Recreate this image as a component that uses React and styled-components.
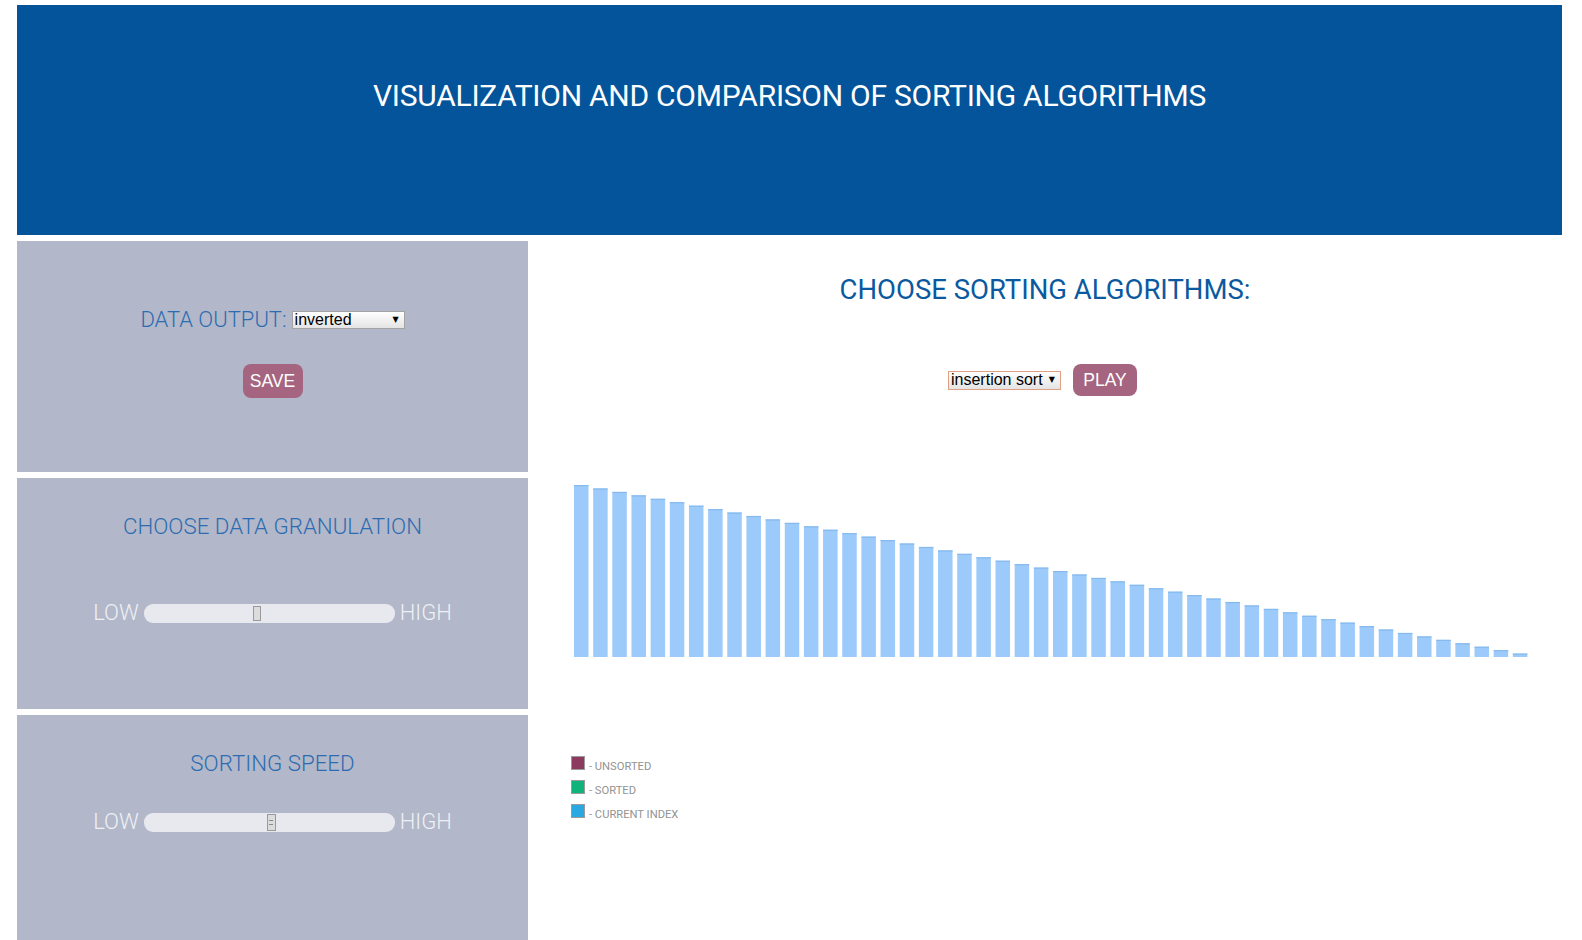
import React from "react";
import styled, { createGlobalStyle } from "styled-components";

const GlobalStyle = createGlobalStyle`
  html, body { margin: 0; padding: 0; background: #ffffff; }
  body { font-family: Roboto, "Liberation Sans", sans-serif; overflow: hidden; }
`;

const Page = styled.div`
  display: flex;
  flex-direction: column;
  gap: 6px;
  padding: 5px 20px 0 17px;
`;

const Header = styled.header`
  height: 230px;
  background: #03549a;
  color: #ffffff;
  text-align: center;
  padding-top: 73px;
  box-sizing: border-box;
`;

const Title = styled.h1`
  margin: 0;
  font-size: 30px;
  line-height: 36px;
  font-weight: 400;
  letter-spacing: -0.25px;
`;

const Main = styled.main`
  display: grid;
  grid-template-columns: 511px 1fr;
`;

const Sidebar = styled.aside`
  display: flex;
  flex-direction: column;
  gap: 6px;
`;

const Panel = styled.section`
  height: 231px;
  background: #b2b8c9;
  display: flex;
  flex-direction: column;
  align-items: center;
  padding-top: ${(p) => p.$top}px;
  box-sizing: border-box;
`;

const Row = styled.div`
  display: flex;
  align-items: center;
  gap: ${(p) => p.$gap || 5}px;
  margin-top: ${(p) => p.$mt || 0}px;
  margin-left: ${(p) => p.$ml || 0}px;
`;

const PanelLabel = styled.span`
  font-size: 22px;
  line-height: 26px;
  font-weight: 300;
  color: #2d6cb1;
`;

const PanelTitle = styled.h3`
  margin: 0;
  font-size: 22.3px;
  line-height: 26px;
  font-weight: 300;
  color: #2d6cb1;
`;

const SelectWrap = styled.span`
  position: relative;
  display: inline-block;
`;

const Select = styled.select`
  appearance: none;
  -webkit-appearance: none;
  width: ${(p) => p.$w}px;
  height: ${(p) => p.$h}px;
  margin: 0;
  padding: 0 14px 0 2px;
  font-family: "Liberation Sans", Arial, sans-serif;
  font-size: 16px;
  line-height: 16px;
  color: #000;
  border: 1px solid ${(p) => p.$border};
  border-radius: 0;
  background: linear-gradient(#ffffff, #e4e4e4);
  box-sizing: border-box;
  outline: none;
  display: block;
`;

const Arrow = styled.span`
  position: absolute;
  right: 6px;
  top: 50%;
  transform: translateY(-55%);
  font-size: 8px;
  color: #000;
  pointer-events: none;
  font-family: "DejaVu Sans", sans-serif;
`;

const Button = styled.button`
  background: #a5647f;
  color: #ffffff;
  border: none;
  border-radius: 8px;
  font-family: "Liberation Sans", Arial, sans-serif;
  font-size: 17.5px;
  height: ${(p) => p.$h}px;
  width: ${(p) => p.$w}px;
  padding: 0;
  margin-top: ${(p) => p.$mt || 0}px;
  cursor: pointer;
`;

const SliderText = styled.span`
  font-size: 22px;
  line-height: 26px;
  font-weight: 300;
  color: #eef0f5;
`;

const Track = styled.div`
  position: relative;
  width: 251px;
  height: 19px;
  border-radius: 9px;
  background: #e8e9ee;
`;

const Thumb = styled.div`
  position: absolute;
  top: ${(p) => p.$t}px;
  width: ${(p) => p.$w}px;
  height: ${(p) => p.$h}px;
  background: #dcdcdc;
  border: 1px solid #9a9a9a;
  box-sizing: border-box;
  display: flex;
  flex-direction: column;
  align-items: center;
  justify-content: center;
  gap: 3px;
`;

const Grip = styled.i`
  display: block;
  width: 4px;
  height: 1px;
  background: #8a8a8a;
`;

const Content = styled.section`
  display: flex;
  flex-direction: column;
  align-items: center;
  padding-top: 32px;
`;

const ContentTitle = styled.h2`
  margin: 0;
  font-size: 27.5px;
  line-height: 34px;
  font-weight: 400;
  color: #0b5aa0;
`;

const Chart = styled.svg`
  display: block;
  align-self: flex-start;
  margin: 81px 0 0 46px;
`;

const Legend = styled.ul`
  align-self: flex-start;
  list-style: none;
  margin: 99px 0 0 43px;
  padding: 0;
  display: flex;
  flex-direction: column;
`;

const LegendItem = styled.li`
  display: flex;
  align-items: flex-start;
  height: 24px;
`;

const Swatch = styled.span`
  width: 14px;
  height: 14px;
  box-sizing: border-box;
  border: 1px solid #9b9b9b;
  background: ${(p) => p.$c};
`;

const LegendText = styled.span`
  font-size: 11.2px;
  color: #939393;
  margin-left: 4px;
  margin-top: 3px;
  line-height: 16px;
`;

function SelectBox({ value, options, w, h, border }) {
  return (
    <SelectWrap>
      <Select defaultValue={value} $w={w} $h={h} $border={border}>
        {options.map((o) => (
          <option key={o}>{o}</option>
        ))}
      </Select>
      <Arrow>▼</Arrow>
    </SelectWrap>
  );
}

function Slider({ mt, thumbLeft, thumbW, thumbH, thumbTop, grip }) {
  return (
    <Row $mt={mt} $gap={5}>
      <SliderText>LOW</SliderText>
      <Track>
        <Thumb style={{ left: thumbLeft }} $w={thumbW} $h={thumbH} $t={thumbTop}>
          {grip && (
            <>
              <Grip />
              <Grip />
            </>
          )}
        </Thumb>
      </Track>
      <SliderText>HIGH</SliderText>
    </Row>
  );
}

const BAR_COUNT = 50;
const bars = Array.from({ length: BAR_COUNT }, (_, i) => ({
  x: i * 19.16,
  h: (BAR_COUNT - i) * 3.44,
}));

export default function App() {
  return (
    <>
      <GlobalStyle />
      <Page>
        <Header>
          <Title>VISUALIZATION AND COMPARISON OF SORTING ALGORITHMS</Title>
        </Header>
        <Main>
          <Sidebar>
            <Panel $top={66}>
              <Row $gap={5}>
                <PanelLabel>DATA OUTPUT:</PanelLabel>
                <SelectBox
                  value="inverted"
                  options={["random", "sorted", "inverted"]}
                  w={113}
                  h={18}
                  border="#a3a3a3"
                />
              </Row>
              <Button $w={60} $h={34} $mt={31}>SAVE</Button>
            </Panel>
            <Panel $top={35}>
              <PanelTitle>CHOOSE DATA GRANULATION</PanelTitle>
              <Slider mt={61} thumbLeft={109} thumbW={8} thumbH={15} thumbTop={2} />
            </Panel>
            <Panel $top={35}>
              <PanelTitle>SORTING SPEED</PanelTitle>
              <Slider mt={33} thumbLeft={123} thumbW={9} thumbH={17} thumbTop={1} grip />
            </Panel>
          </Sidebar>
          <Content>
            <ContentTitle>CHOOSE SORTING ALGORITHMS:</ContentTitle>
            <Row $mt={57} $gap={12} $ml={-5}>
              <SelectBox
                value="insertion sort"
                options={["bubble sort", "insertion sort", "selection sort", "quick sort", "merge sort"]}
                w={113}
                h={19}
                border="#e0a086"
              />
              <Button $w={64} $h={32}>PLAY</Button>
            </Row>
            <Chart width="960" height="180" viewBox="0 0 960 180">
              {bars.map((b, i) => (
                <g key={i}>
                  <rect x={b.x} y={180 - b.h} width="14.5" height={b.h} fill="#9ccbfb" />
                  <rect x={b.x} y={180 - b.h} width="14.5" height="1.2" fill="#86b9ec" />
                </g>
              ))}
            </Chart>
            <Legend>
              <LegendItem>
                <Swatch $c="#8c3a5f" />
                <LegendText>- UNSORTED</LegendText>
              </LegendItem>
              <LegendItem>
                <Swatch $c="#10b47a" />
                <LegendText>- SORTED</LegendText>
              </LegendItem>
              <LegendItem>
                <Swatch $c="#2aa8e2" />
                <LegendText>- CURRENT INDEX</LegendText>
              </LegendItem>
            </Legend>
          </Content>
        </Main>
      </Page>
    </>
  );
}
